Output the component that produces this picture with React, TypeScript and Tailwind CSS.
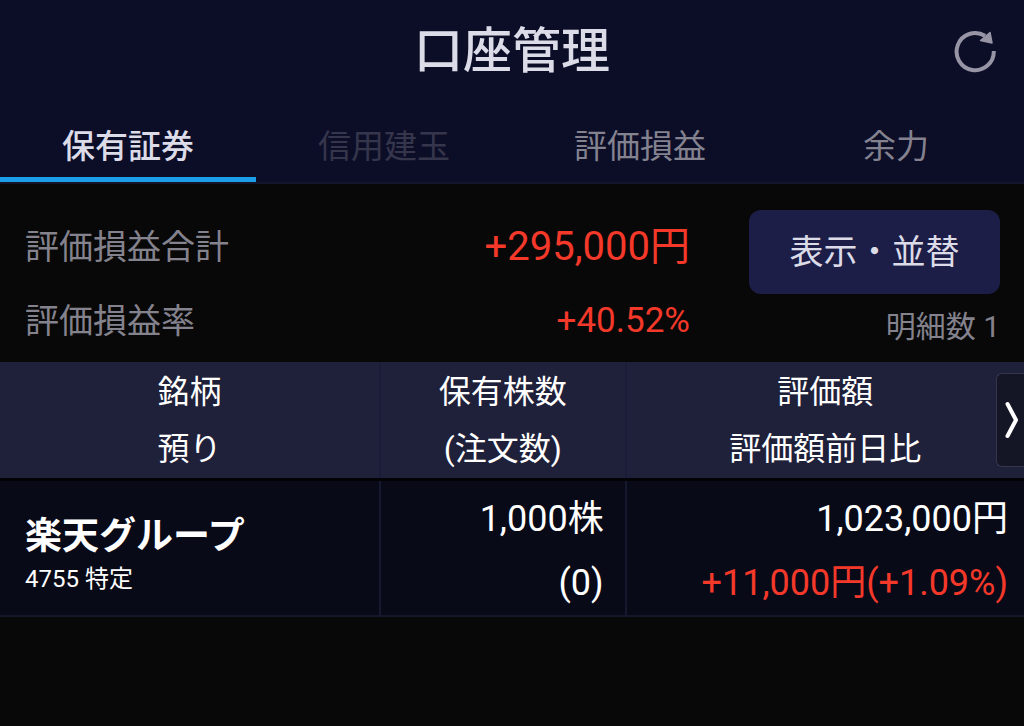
import { useState } from "react";
import { clsx } from "clsx";

interface Tab {
  id: string;
  label: string;
  disabled?: boolean;
}

interface Holding {
  code: string;
  name: string;
  account: string;
  shares: string;
  ordered: string;
  value: string;
  change: string;
}

const TABS: Tab[] = [
  { id: "holdings", label: "保有証券" },
  { id: "margin", label: "信用建玉", disabled: true },
  { id: "profit", label: "評価損益" },
  { id: "capacity", label: "余力" },
];

const COLUMNS = [
  { lines: ["銘柄", "預り"], className: "w-[37.1%]" },
  { lines: ["保有株数", "(注文数)"], className: "w-[24%]" },
  { lines: ["評価額", "評価額前日比"], className: "" },
];

const HOLDINGS: Holding[] = [
  {
    code: "4755",
    name: "楽天グループ",
    account: "特定",
    shares: "1,000株",
    ordered: "(0)",
    value: "1,023,000円",
    change: "+11,000円(+1.09%)",
  },
];

function ReloadIcon() {
  return (
    <svg viewBox="0 0 44 44" className="h-11 w-11" fill="none" aria-hidden="true">
      <path
        d="M40.8 21A18.6 18.6 0 1 1 32 5.8"
        stroke="currentColor"
        strokeWidth="4"
      />
      <path
        d="M37 2.5L39 13L27.5 10.5Z"
        fill="currentColor"
        stroke="currentColor"
        strokeWidth="1.5"
        strokeLinejoin="round"
      />
    </svg>
  );
}

function Header() {
  return (
    <header className="relative flex h-[110px] justify-center">
      <h1 className="text-[49px] leading-[104px] font-medium text-[#dcdbe8]">口座管理</h1>
      <button
        type="button"
        aria-label="更新"
        className="absolute top-[30px] right-[27px] text-[#9694a5]"
      >
        <ReloadIcon />
      </button>
    </header>
  );
}

function TabBar() {
  const [active, setActive] = useState("holdings");

  return (
    <div role="tablist" className="grid grid-cols-4 border-b-2 border-[#14152a]">
      {TABS.map((tab) => (
        <button
          key={tab.id}
          type="button"
          role="tab"
          aria-selected={tab.id === active}
          disabled={tab.disabled}
          onClick={() => setActive(tab.id)}
          className={clsx(
            "h-[72px] border-b-[5px] pt-1.5 text-[33px] leading-[61px]",
            tab.id === active ? "border-[#1b9fe8] font-medium" : "border-transparent",
            tab.disabled
              ? "text-[#35354b]"
              : tab.id === active
                ? "text-[#dcdbe8]"
                : "text-[#84828f]",
          )}
        >
          {tab.label}
        </button>
      ))}
    </div>
  );
}

function Summary() {
  return (
    <section className="flex gap-[59px] pt-[26px] pr-6 pb-0.5 pl-[25px]">
      <dl className="flex-1 text-[34px] leading-[74px] text-[#84828d]">
        <div className="flex justify-between">
          <dt>評価損益合計</dt>
          <dd className="text-[40px] text-[#f4392a]">+295,000円</dd>
        </div>
        <div className="flex justify-between">
          <dt>評価損益率</dt>
          <dd className="text-[35px] text-[#f4392a]">+40.52%</dd>
        </div>
      </dl>
      <div className="flex w-[251px] flex-col">
        <button
          type="button"
          className="h-[84px] rounded-xl bg-[#1d1e47] text-[34px] leading-[84px] text-[#dcdbe8]"
        >
          表示・並替
        </button>
        <p className="text-right text-[30px] leading-[66px] text-[#84828d]">明細数 1</p>
      </div>
    </section>
  );
}

function HoldingsTable() {
  return (
    <div className="relative">
      <table className="w-full table-fixed border-collapse text-white">
        <thead className="border-b-[3px] border-[#030305] bg-[#1f2039]">
          <tr>
            {COLUMNS.map(({ lines, className }) => (
              <th
                key={lines[0]}
                scope="col"
                className={clsx(
                  "border-r-2 border-[#1a1c38] p-0 pt-0.5 text-[32px] leading-[57px] font-normal last:border-r-0",
                  className,
                )}
              >
                {lines.map((line) => (
                  <span key={line} className="block">
                    {line}
                  </span>
                ))}
              </th>
            ))}
          </tr>
        </thead>
        <tbody>
          {HOLDINGS.map((holding) => (
            <tr key={holding.code} className="border-b-2 border-[#14172a] bg-[#080a18]">
              <td className="border-r-2 border-[#15182f] p-0 pt-[18px] pl-[25px]">
                <span className="block text-[37px] leading-[44px] font-bold">{holding.name}</span>
                <span className="block text-2xl leading-[40px]">
                  {holding.code} {holding.account}
                </span>
              </td>
              <td className="border-r-2 border-[#15182f] p-0 pt-1.5 pr-[21px] text-right text-[36px] leading-[64px]">
                <span className="block">{holding.shares}</span>
                <span className="block">{holding.ordered}</span>
              </td>
              <td className="p-0 pt-1.5 pr-4 text-right text-[36px] leading-[64px]">
                <span className="block">{holding.value}</span>
                <span className="block text-[#f4392a]">{holding.change}</span>
              </td>
            </tr>
          ))}
        </tbody>
      </table>
      <button
        type="button"
        aria-label="次の列を表示"
        className="absolute top-[11px] right-0 flex h-[94px] w-7 items-center justify-center rounded-l-md border border-r-0 border-[#35364c] bg-[#151625]"
      >
        <svg viewBox="0 0 14 38" className="h-[38px] w-[14px]" fill="none" aria-hidden="true">
          <path
            d="M3.5 3L12 19L3.5 35"
            stroke="#fff"
            strokeWidth="4"
            strokeLinecap="round"
            strokeLinejoin="round"
          />
        </svg>
      </button>
    </div>
  );
}

export default function App() {
  return (
    <main className="min-h-screen bg-[#080808] font-[Roboto,'Noto_Sans_CJK_JP',sans-serif]">
      <div className="bg-[#0c0e28]">
        <Header />
        <TabBar />
      </div>
      <Summary />
      <HoldingsTable />
    </main>
  );
}
